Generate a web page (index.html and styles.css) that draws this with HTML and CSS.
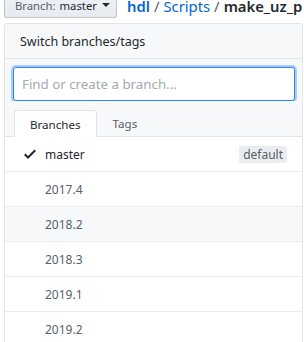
FILE: index.html
```html
<!DOCTYPE html>
<html>
<head>
<meta charset="utf-8">
<link rel="stylesheet" href="styles.css">
</head>
<body>
<div class="top">
  <button class="btn"><span class="lbl">Branch:</span> <span class="cur">master</span><span class="caret"></span></button>
  <div class="crumb"><a class="repo">hdl</a><span class="sep">/</span><a class="dir">Scripts</a><span class="sep">/</span><strong class="file">make_uz_p</strong></div>
</div>
<div class="panel">
  <div class="header">Switch branches/tags</div>
  <div class="filter"><input class="input" type="text" placeholder="Find or create a branch..."></div>
  <div class="tabs">
    <div class="tab selected">Branches</div>
    <div class="tab">Tags</div>
  </div>
  <div class="list">
    <div class="row current">
      <span class="check"><svg width="12" height="16" viewBox="0 0 12 16"><path fill="#24292e" d="M12 5l-8 8-4-4 1.5-1.5L4 10l6.5-6.5L12 5z"/></svg></span>
      <span class="name">master</span>
      <span class="badge">default</span>
    </div>
    <div class="row"><span class="check"></span><span class="name">2017.4</span></div>
    <div class="row hover"><span class="check"></span><span class="name">2018.2</span></div>
    <div class="row"><span class="check"></span><span class="name">2018.3</span></div>
    <div class="row"><span class="check"></span><span class="name">2019.1</span></div>
    <div class="row"><span class="check"></span><span class="name">2019.2</span></div>
  </div>
</div>
</body>
</html>
```
FILE: styles.css
```css
html, body {
  margin: 0;
  padding: 0;
  background: #fff;
  font-family: "Noto Sans", "Open Sans", sans-serif;
  color: #24292e;
  overflow: hidden;
}
.top {
  display: flex;
  align-items: flex-start;
  gap: 10px;
  margin-top: -10px;
  padding-left: 4px;
  height: 28px;
}
.btn {
  flex-shrink: 0;
  display: flex;
  align-items: center;
  height: 28px;
  width: 113px;
  box-sizing: border-box;
  padding: 2px 0 0 10px;
  font-family: inherit;
  font-size: 11.3px;
  border: 1px solid rgba(27,31,35,.2);
  border-radius: 3px;
  background: linear-gradient(#eff3f6, #e6ebf1);
  color: #24292e;
}
.btn .lbl { color: #586069; margin-right: 4px; }
.btn .cur { color: #24292e; }
.caret {
  display: inline-block;
  margin-left: 5px;
  width: 0; height: 0;
  border-left: 4px solid transparent;
  border-right: 4px solid transparent;
  border-top: 4px solid #24292e;
}
.crumb {
  flex-shrink: 0;
  font-size: 14.8px;
  white-space: nowrap;
  line-height: 20px;
  margin-top: 6px;
}
.crumb .repo { color: #0366d6; font-weight: 600; }
.crumb .dir { color: #0366d6; }
.crumb .sep { color: #586069; margin: 0 4px; }
.crumb .file { color: #24292e; font-weight: 600; }
.panel {
  margin: 5px 0 0 4px;
  width: 299px;
  box-sizing: border-box;
  border: 1px solid #e1e4e8;
  border-radius: 3px 3px 0 0;
  background: #fff;
}
.header {
  height: 34px;
  display: flex;
  align-items: center;
  padding-left: 15px;
  font-size: 12.5px;
  color: #24292e;
  background: #f6f8fa;
  border-bottom: 1px solid #e1e4e8;
}
.filter {
  background: #f6f8fa;
  padding: 8px 7px 0 8px;
}
.input {
  display: block;
  width: 100%;
  height: 34px;
  box-sizing: border-box;
  margin: 0;
  padding: 0 8px;
  font-family: inherit;
  font-size: 13.3px;
  border: 1px solid #2188ff;
  border-radius: 3px;
  outline: none;
  box-shadow: 0 0 0 2px rgba(3,102,214,.3);
  background: #fff;
}
.input::placeholder { color: #a3aab1; }
.tabs {
  display: flex;
  background: #f6f8fa;
  padding: 9px 0 0 9px;
  border-bottom: 1px solid #e1e4e8;
}
.tab {
  height: 25px;
  padding: 0 15px;
  display: flex;
  align-items: center;
  font-size: 11.6px;
  color: #586069;
  border: 1px solid transparent;
  border-bottom: 0;
  margin-bottom: -1px;
  border-radius: 3px 3px 0 0;
}
.tab.selected {
  background: #fff;
  color: #24292e;
  border-color: #e1e4e8;
  height: 26px;
}
.row {
  height: 34px;
  display: flex;
  align-items: center;
  padding-left: 19px;
  padding-right: 15px;
  border-bottom: 1px solid #eaecef;
  font-size: 12px;
  color: #586069;
}
.row.hover { background: #f6f8fa; }
.row.current { color: #24292e; }
.check {
  width: 21px;
  display: flex;
  align-items: center;
}
.name { flex: 1; }
.badge {
  height: 17px;
  display: flex;
  align-items: center;
  padding: 0 4px;
  font-size: 12px;
  color: #586069;
  background: #eaecef;
  border-radius: 2px;
}
```
